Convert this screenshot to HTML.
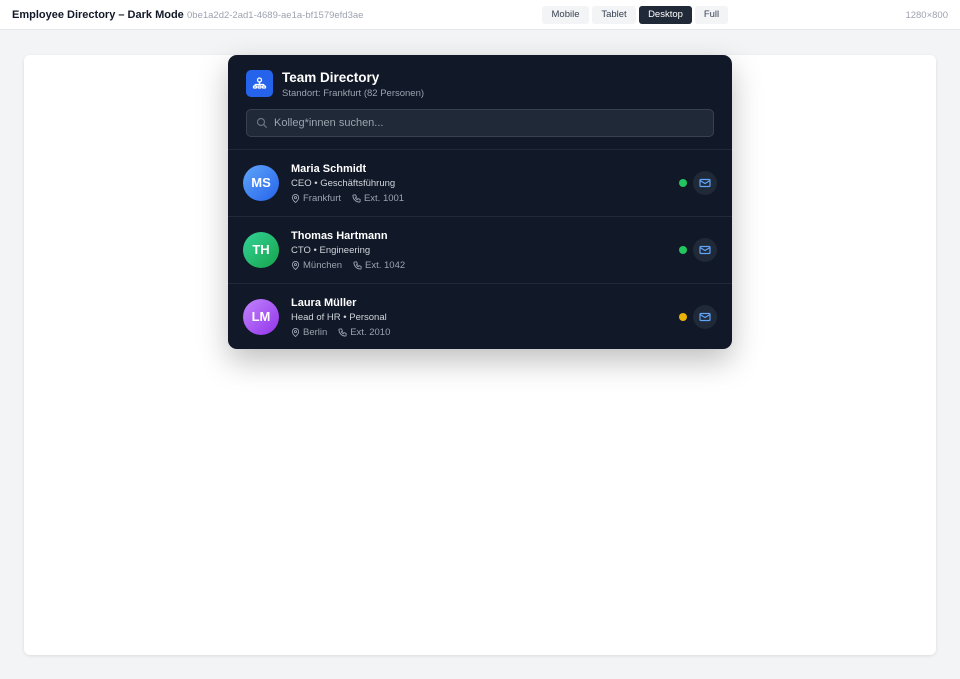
<!DOCTYPE html>
<html><head><meta charset="utf-8"><style>
*{box-sizing:border-box;margin:0;padding:0}
body{width:960px;height:679px;background:#f3f4f6;font-family:"Liberation Sans",sans-serif;position:relative;overflow:hidden}
.top{position:absolute;left:0;top:0;width:960px;height:30px;background:#fff;border-bottom:1px solid #e5e7eb}
.t1{position:absolute;left:12px;top:9px;font-size:11px;font-weight:bold;color:#111827}
.t2{position:absolute;left:187px;top:10px;font-size:9.5px;color:#9ca3af}
.btn{position:absolute;top:6px;height:18px;border-radius:3px;background:#f3f4f6;color:#374151;font-size:9.5px;line-height:18px;text-align:center}
.t3{position:absolute;right:12px;top:10px;font-size:9.5px;color:#9ca3af}
.panel{position:absolute;left:24px;top:55px;width:912px;height:600px;background:#fff;border-radius:6px;box-shadow:0 1px 3px rgba(0,0,0,.1)}
.card{position:absolute;left:228px;top:55px;width:504px;height:294px;background:#111827;border-radius:9px;box-shadow:0 12px 30px rgba(0,0,0,.25);overflow:hidden}
.logo{position:absolute;left:18px;top:15px;width:27px;height:27px;border-radius:5px;background:#2563eb}
.title{position:absolute;left:54px;top:15px;font-size:13.5px;font-weight:bold;color:#fff}
.sub{position:absolute;left:54px;top:33px;font-size:9.5px;color:#9ca3af}
.search{position:absolute;left:18px;top:54px;width:468px;height:28px;border-radius:5px;background:#1f2937;border:1px solid #374151}
.search span{position:absolute;left:27px;top:7px;font-size:11px;color:#9ca3af}
.row{position:absolute;left:0;width:504px;height:67px;border-top:1px solid #1f2937}
.av{position:absolute;left:15px;top:15px;width:36px;height:36px;border-radius:50%;color:#fff;font-weight:bold;font-size:13px;line-height:36px;text-align:center}
.nm{position:absolute;left:63px;top:13px;font-size:11px;font-weight:bold;color:#fff}
.rl{position:absolute;left:63px;top:28px;font-size:9.5px;color:#d1d5db}
.mt{position:absolute;left:63px;top:43px;font-size:9.5px;color:#9ca3af;display:flex;align-items:center;gap:3px}
.mt svg{flex:none}
.dot{position:absolute;left:451px;top:29px;width:8px;height:8px;border-radius:50%}
.mail{position:absolute;left:465px;top:21px;width:24px;height:24px;border-radius:50%;background:#1f2937}
</style></head><body>
<div class="top">
<div class="t1">Employee Directory – Dark Mode</div>
<div class="t2">0be1a2d2-2ad1-4689-ae1a-bf1579efd3ae</div>
<div class="btn" style="left:542px;width:47px">Mobile</div>
<div class="btn" style="left:592px;width:44px">Tablet</div>
<div class="btn" style="left:639px;width:53px;background:#1f2937;color:#fff">Desktop</div>
<div class="btn" style="left:695px;width:33px">Full</div>
<div class="t3">1280×800</div>
</div>
<div class="panel"></div>
<div class="card">
<div class="logo"><svg width="27" height="27" viewBox="0 0 27 27" fill="none" stroke="#fff" stroke-width="1.3"><circle cx="13.5" cy="10" r="2"/><path d="M13.5 12v2.5M9 14.5h9M9 14.5v1.5M18 14.5v1.5"/><rect x="7.5" y="16" width="3" height="2" rx=".5"/><rect x="12" y="16" width="3" height="2" rx=".5"/><rect x="16.5" y="16" width="3" height="2" rx=".5"/></svg></div>
<div class="title">Team Directory</div>
<div class="sub">Standort: Frankfurt (82 Personen)</div>
<div class="search"><svg style="position:absolute;left:9px;top:7px" width="12" height="12" viewBox="0 0 12 12" fill="none" stroke="#6b7280" stroke-width="1.2"><circle cx="5" cy="5" r="3.5"/><path d="M7.7 7.7l3 3"/></svg><span>Kolleg*innen suchen...</span></div>

<div class="row" style="top:94px">
<div class="av" style="background:linear-gradient(135deg,#60a5fa,#2563eb)">MS</div>
<div class="nm">Maria Schmidt</div><div class="rl">CEO • Geschäftsführung</div>
<div class="mt"><svg width="9" height="9" viewBox="0 0 10 10" fill="none" stroke="#9ca3af" stroke-width="1"><path d="M5 9.5S1.5 6.3 1.5 4a3.5 3.5 0 0 1 7 0C8.5 6.3 5 9.5 5 9.5z"/><circle cx="5" cy="4" r="1.2"/></svg>Frankfurt&nbsp;&nbsp;&nbsp;<svg width="9" height="9" viewBox="0 0 10 10" fill="none" stroke="#9ca3af" stroke-width="1"><path d="M2 1h2l1 2.5-1.2.8a5 5 0 0 0 2 2l.8-1.2L9 6v2a1 1 0 0 1-1 1A7.5 7.5 0 0 1 1 2a1 1 0 0 1 1-1z"/></svg>Ext. 1001</div>
<div class="dot" style="background:#22c55e"></div>
<div class="mail"><svg width="24" height="24" viewBox="0 0 24 24" fill="none" stroke="#60a5fa" stroke-width="1.2"><rect x="7" y="8.5" width="10" height="7" rx="1"/><path d="M7 9.5l5 3 5-3"/></svg></div>
</div>
<div class="row" style="top:161px">
<div class="av" style="background:linear-gradient(135deg,#34d399,#16a34a)">TH</div>
<div class="nm">Thomas Hartmann</div><div class="rl">CTO • Engineering</div>
<div class="mt"><svg width="9" height="9" viewBox="0 0 10 10" fill="none" stroke="#9ca3af" stroke-width="1"><path d="M5 9.5S1.5 6.3 1.5 4a3.5 3.5 0 0 1 7 0C8.5 6.3 5 9.5 5 9.5z"/><circle cx="5" cy="4" r="1.2"/></svg>München&nbsp;&nbsp;&nbsp;<svg width="9" height="9" viewBox="0 0 10 10" fill="none" stroke="#9ca3af" stroke-width="1"><path d="M2 1h2l1 2.5-1.2.8a5 5 0 0 0 2 2l.8-1.2L9 6v2a1 1 0 0 1-1 1A7.5 7.5 0 0 1 1 2a1 1 0 0 1 1-1z"/></svg>Ext. 1042</div>
<div class="dot" style="background:#22c55e"></div>
<div class="mail"><svg width="24" height="24" viewBox="0 0 24 24" fill="none" stroke="#60a5fa" stroke-width="1.2"><rect x="7" y="8.5" width="10" height="7" rx="1"/><path d="M7 9.5l5 3 5-3"/></svg></div>
</div>
<div class="row" style="top:228px">
<div class="av" style="background:linear-gradient(135deg,#c084fc,#9333ea)">LM</div>
<div class="nm">Laura Müller</div><div class="rl">Head of HR • Personal</div>
<div class="mt"><svg width="9" height="9" viewBox="0 0 10 10" fill="none" stroke="#9ca3af" stroke-width="1"><path d="M5 9.5S1.5 6.3 1.5 4a3.5 3.5 0 0 1 7 0C8.5 6.3 5 9.5 5 9.5z"/><circle cx="5" cy="4" r="1.2"/></svg>Berlin&nbsp;&nbsp;&nbsp;<svg width="9" height="9" viewBox="0 0 10 10" fill="none" stroke="#9ca3af" stroke-width="1"><path d="M2 1h2l1 2.5-1.2.8a5 5 0 0 0 2 2l.8-1.2L9 6v2a1 1 0 0 1-1 1A7.5 7.5 0 0 1 1 2a1 1 0 0 1 1-1z"/></svg>Ext. 2010</div>
<div class="dot" style="background:#eab308"></div>
<div class="mail"><svg width="24" height="24" viewBox="0 0 24 24" fill="none" stroke="#60a5fa" stroke-width="1.2"><rect x="7" y="8.5" width="10" height="7" rx="1"/><path d="M7 9.5l5 3 5-3"/></svg></div>
</div>
</div>
</body></html>
